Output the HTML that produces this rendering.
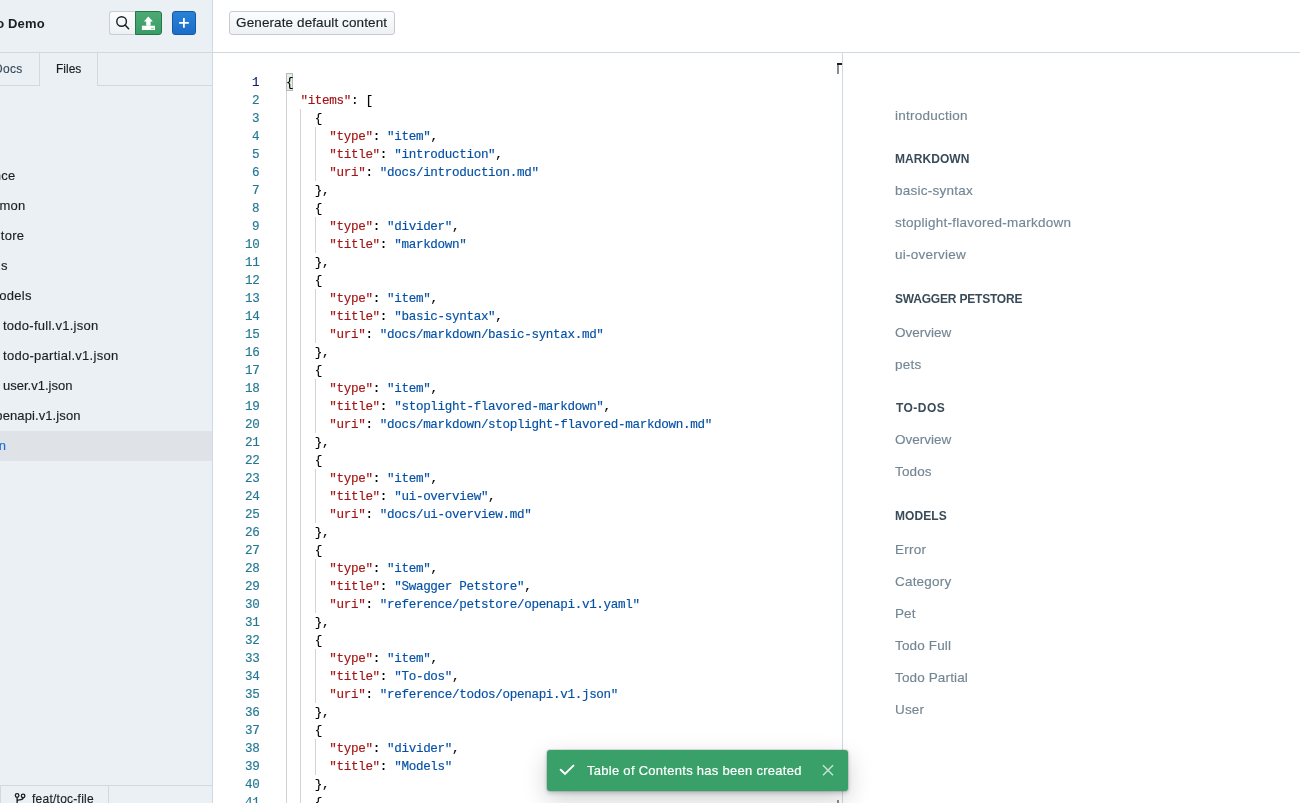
<!DOCTYPE html>
<html><head><meta charset="utf-8">
<style>
*{box-sizing:border-box;margin:0;padding:0}
html,body{width:1300px;height:803px;overflow:hidden;background:#fff;font-family:"Liberation Sans",sans-serif;position:relative}
.abs{position:absolute}
.title,.tab,.fi,#gen,.nums div,.code div,.toc,.toch,.tt{will-change:transform}
.code div,.nums div{-webkit-text-stroke:0.15px currentColor}
.toc,.fi,.tab,#gen{-webkit-text-stroke:0.15px currentColor}
.code i.k{-webkit-text-stroke:0.15px #a31515}.code i.v{-webkit-text-stroke:0.15px #0451a5}
#side{position:absolute;left:0;top:0;width:212px;height:803px;background:#ebf0f4;overflow:hidden}
.bl{position:absolute;background:#cfd9e1}
.title{position:absolute;right:167.6px;top:16px;font-weight:bold;font-size:13px;color:#182026;white-space:nowrap;line-height:16px;letter-spacing:0.15px}
.btn{position:absolute;top:11px;height:24px}
#bsearch{left:109px;width:27px;background:linear-gradient(#fdfdfe,#eef1f3);border:1px solid #c9ced2;border-right:none;border-radius:3px 0 0 3px}
#bup{left:135px;width:27px;background:linear-gradient(#4caa74,#3a9d66);border:1px solid #23764a;border-radius:0 3px 3px 0}
#bplus{left:172px;width:24px;background:linear-gradient(#2a82d8,#1a6dc8);border:1px solid #1558a3;border-radius:3px}
.tab{position:absolute;top:52px;height:34px;font-size:13px;color:#182026;line-height:34px;white-space:nowrap}
.fi{position:absolute;font-size:13px;color:#182026;white-space:nowrap;line-height:16px;letter-spacing:0.3px}
#sel{position:absolute;left:0;top:431px;width:212px;height:30px;background:#dfe3e7}
#main{position:absolute;left:213px;top:0;width:1087px;height:803px}
#gen{position:absolute;left:229px;top:11px;width:166px;height:24px;border-radius:3px;background:linear-gradient(#fbfcfd,#eef1f4);border:1px solid #c5cbd0;font-size:13.5px;color:#182026;line-height:21px;padding-left:6.1px;white-space:nowrap;letter-spacing:0.1px}
.nums div{position:absolute;right:1040.6px;height:18px;font:12.6px/18px "Liberation Mono",monospace;letter-spacing:-0.34px;margin-top:1px;color:#237893;white-space:pre}
.nums div.act{color:#0b216f}
.code div{position:absolute;left:286px;height:18px;font:12.6px/18px "Liberation Mono",monospace;letter-spacing:-0.34px;color:#000;white-space:pre}
.code i{font-style:normal}
.code i.k{color:#a31515}
.code i.v{color:#0451a5}
.bm{font-weight:normal;display:inline-block;height:18px;background:#e5f0e5;outline:1px solid #b9b9b9;outline-offset:-1px}
.g{position:absolute;width:1px;background:#d3d3d3}
.toc{position:absolute;left:895px;font-size:13.5px;color:#738694;white-space:nowrap;line-height:16px;letter-spacing:0.25px}
.toch{position:absolute;left:895px;font-size:12px;font-weight:bold;color:#394b59;white-space:nowrap;line-height:16px;letter-spacing:-0.2px}
#toast{position:absolute;left:547px;top:750px;width:301px;height:41px;background:#3aa06a;border-radius:3px;box-shadow:0 0 0 1px rgba(16,22,26,.1),0 2px 4px rgba(16,22,26,.2),0 8px 24px rgba(16,22,26,.2)}
</style></head><body>
<div id="side">
  <div class="title">Stoplight To-do Demo</div>
  <div class="btn" id="bsearch"><svg width="26" height="22" style="position:absolute;left:0;top:0"><circle cx="11.6" cy="9.5" r="4.8" fill="none" stroke="#182026" stroke-width="1.4"/><line x1="15.1" y1="13.1" x2="18.6" y2="16.8" stroke="#182026" stroke-width="1.5" stroke-linecap="round"/></svg></div>
  <div class="btn" id="bup"><svg width="25" height="22" style="position:absolute;left:0;top:0"><path d="M12.3 4.6 L7.9 9.4 L10.2 9.4 L10.2 13.8 L14.6 13.8 L14.6 9.4 L16.9 9.4 Z" fill="#fff"/><path d="M5.9 13.7 H19 V18 H5.9 Z" fill="#fff"/><rect x="15" y="15.9" width="3" height="1.2" fill="#9fd0b3"/></svg></div>
  <div class="btn" id="bplus"><svg width="22" height="22" style="position:absolute;left:0;top:0"><path d="M10.9 6.1 V15.8 M6.1 10.95 H15.8" stroke="#fff" stroke-width="1.8"/></svg></div>
  <div class="bl" style="left:0;top:52px;width:212px;height:1px"></div>
  <div class="tab" style="right:189.2px;color:#394b59;text-align:right;font-size:12px;letter-spacing:0.3px">Docs</div>
  <div class="bl" style="left:39px;top:53px;width:1px;height:33px"></div>
  <div class="tab" style="left:56px;font-size:12px;letter-spacing:0px">Files</div>
  <div class="bl" style="left:97px;top:53px;width:1px;height:33px"></div>
  <div class="bl" style="left:0;top:85px;width:39px;height:1px"></div>
  <div class="bl" style="left:97px;top:85px;width:115px;height:1px"></div>
  <div id="sel"></div>
  <div class="fi" style="right:196px;top:168px">reference</div>
  <div class="fi" style="right:186px;top:198px">common</div>
  <div class="fi" style="right:188px;top:228px">petstore</div>
  <div class="fi" style="right:204.4px;top:258px">s</div>
  <div class="fi" style="right:180px;top:288px">models</div>
  <div class="fi" style="left:3px;top:318px;letter-spacing:0.26px">todo-full.v1.json</div>
  <div class="fi" style="left:3px;top:348px;letter-spacing:0.28px">todo-partial.v1.json</div>
  <div class="fi" style="left:3px;top:378px;letter-spacing:0px">user.v1.json</div>
  <div class="fi" style="right:131px;top:408px;letter-spacing:0.1px">openapi.v1.json</div>
  <div class="fi" style="right:206px;top:438px;color:#1772d8">toc.json</div>
  <div class="bl" style="left:0;top:785px;width:212px;height:1px"></div>
  <div class="bl" style="left:0;top:786px;width:1px;height:17px"></div>
  <div class="bl" style="left:108px;top:786px;width:1px;height:17px"></div>
  <svg class="abs" style="left:0;top:786px" width="40" height="17"><circle cx="17.1" cy="9.5" r="1.8" fill="none" stroke="#182026" stroke-width="1.3"/><circle cx="23.1" cy="9.9" r="1.8" fill="none" stroke="#182026" stroke-width="1.3"/><path d="M17.1 11.3 V17 M23.1 11.7 C23.1 13.5 21.5 13.8 19.5 13.8 C18 13.8 17.1 14.5 17.1 15.5" fill="none" stroke="#182026" stroke-width="1.3"/></svg>
  <div class="fi" style="left:32.4px;top:791.4px;font-size:12px;letter-spacing:0.25px">feat/toc-file</div>
</div>
<div class="bl" style="left:212px;top:0;width:1px;height:803px"></div>
<div class="bl" style="left:213px;top:52px;width:1087px;height:1px"></div>
<div id="gen">Generate default content</div>
<div class="nums">
<div class="act" style="top:73px">1</div>
<div style="top:91px">2</div>
<div style="top:109px">3</div>
<div style="top:127px">4</div>
<div style="top:145px">5</div>
<div style="top:163px">6</div>
<div style="top:181px">7</div>
<div style="top:199px">8</div>
<div style="top:217px">9</div>
<div style="top:235px">10</div>
<div style="top:253px">11</div>
<div style="top:271px">12</div>
<div style="top:289px">13</div>
<div style="top:307px">14</div>
<div style="top:325px">15</div>
<div style="top:343px">16</div>
<div style="top:361px">17</div>
<div style="top:379px">18</div>
<div style="top:397px">19</div>
<div style="top:415px">20</div>
<div style="top:433px">21</div>
<div style="top:451px">22</div>
<div style="top:469px">23</div>
<div style="top:487px">24</div>
<div style="top:505px">25</div>
<div style="top:523px">26</div>
<div style="top:541px">27</div>
<div style="top:559px">28</div>
<div style="top:577px">29</div>
<div style="top:595px">30</div>
<div style="top:613px">31</div>
<div style="top:631px">32</div>
<div style="top:649px">33</div>
<div style="top:667px">34</div>
<div style="top:685px">35</div>
<div style="top:703px">36</div>
<div style="top:721px">37</div>
<div style="top:739px">38</div>
<div style="top:757px">39</div>
<div style="top:775px">40</div>
<div style="top:793px">41</div>
</div>
<div class="abs" style="left:286px;top:73px;width:7px;height:18px;background:#e5f0e5;border:1px solid #b9b9b9"></div>
<span class="g" style="left:286px;top:91px;height:720px"></span>
<span class="g" style="left:300px;top:109px;height:702px"></span>
<span class="g" style="left:315px;top:127px;height:54px"></span>
<span class="g" style="left:315px;top:217px;height:36px"></span>
<span class="g" style="left:315px;top:289px;height:54px"></span>
<span class="g" style="left:315px;top:379px;height:54px"></span>
<span class="g" style="left:315px;top:469px;height:54px"></span>
<span class="g" style="left:315px;top:559px;height:54px"></span>
<span class="g" style="left:315px;top:649px;height:54px"></span>
<span class="g" style="left:315px;top:739px;height:36px"></span>
<div class="code">
<div style="top:74px">{</div>
<div style="top:92px">  <i class="k">&quot;items&quot;</i>: [</div>
<div style="top:110px">    {</div>
<div style="top:128px">      <i class="k">&quot;type&quot;</i>: <i class="v">&quot;item&quot;</i>,</div>
<div style="top:146px">      <i class="k">&quot;title&quot;</i>: <i class="v">&quot;introduction&quot;</i>,</div>
<div style="top:164px">      <i class="k">&quot;uri&quot;</i>: <i class="v">&quot;docs/introduction.md&quot;</i></div>
<div style="top:182px">    },</div>
<div style="top:200px">    {</div>
<div style="top:218px">      <i class="k">&quot;type&quot;</i>: <i class="v">&quot;divider&quot;</i>,</div>
<div style="top:236px">      <i class="k">&quot;title&quot;</i>: <i class="v">&quot;markdown&quot;</i></div>
<div style="top:254px">    },</div>
<div style="top:272px">    {</div>
<div style="top:290px">      <i class="k">&quot;type&quot;</i>: <i class="v">&quot;item&quot;</i>,</div>
<div style="top:308px">      <i class="k">&quot;title&quot;</i>: <i class="v">&quot;basic-syntax&quot;</i>,</div>
<div style="top:326px">      <i class="k">&quot;uri&quot;</i>: <i class="v">&quot;docs/markdown/basic-syntax.md&quot;</i></div>
<div style="top:344px">    },</div>
<div style="top:362px">    {</div>
<div style="top:380px">      <i class="k">&quot;type&quot;</i>: <i class="v">&quot;item&quot;</i>,</div>
<div style="top:398px">      <i class="k">&quot;title&quot;</i>: <i class="v">&quot;stoplight-flavored-markdown&quot;</i>,</div>
<div style="top:416px">      <i class="k">&quot;uri&quot;</i>: <i class="v">&quot;docs/markdown/stoplight-flavored-markdown.md&quot;</i></div>
<div style="top:434px">    },</div>
<div style="top:452px">    {</div>
<div style="top:470px">      <i class="k">&quot;type&quot;</i>: <i class="v">&quot;item&quot;</i>,</div>
<div style="top:488px">      <i class="k">&quot;title&quot;</i>: <i class="v">&quot;ui-overview&quot;</i>,</div>
<div style="top:506px">      <i class="k">&quot;uri&quot;</i>: <i class="v">&quot;docs/ui-overview.md&quot;</i></div>
<div style="top:524px">    },</div>
<div style="top:542px">    {</div>
<div style="top:560px">      <i class="k">&quot;type&quot;</i>: <i class="v">&quot;item&quot;</i>,</div>
<div style="top:578px">      <i class="k">&quot;title&quot;</i>: <i class="v">&quot;Swagger Petstore&quot;</i>,</div>
<div style="top:596px">      <i class="k">&quot;uri&quot;</i>: <i class="v">&quot;reference/petstore/openapi.v1.yaml&quot;</i></div>
<div style="top:614px">    },</div>
<div style="top:632px">    {</div>
<div style="top:650px">      <i class="k">&quot;type&quot;</i>: <i class="v">&quot;item&quot;</i>,</div>
<div style="top:668px">      <i class="k">&quot;title&quot;</i>: <i class="v">&quot;To-dos&quot;</i>,</div>
<div style="top:686px">      <i class="k">&quot;uri&quot;</i>: <i class="v">&quot;reference/todos/openapi.v1.json&quot;</i></div>
<div style="top:704px">    },</div>
<div style="top:722px">    {</div>
<div style="top:740px">      <i class="k">&quot;type&quot;</i>: <i class="v">&quot;divider&quot;</i>,</div>
<div style="top:758px">      <i class="k">&quot;title&quot;</i>: <i class="v">&quot;Models&quot;</i></div>
<div style="top:776px">    },</div>
<div style="top:794px">    {</div>
</div>
<div class="abs" style="left:837px;top:63px;width:5px;height:2px;background:#1e1e1e"></div>
<div class="abs" style="left:837px;top:65px;width:2px;height:9px;background:#8c8c8c"></div>
<div class="bl" style="left:842px;top:53px;width:1px;height:750px"></div>
<div class="abs" style="left:837px;top:800px;width:2px;height:3px;background:#8c8c8c"></div>

<div class="toc" style="top:107.6px">introduction</div>
<div class="toch" style="top:151px;letter-spacing:0.05px">MARKDOWN</div>
<div class="toc" style="top:183.2px">basic-syntax</div>
<div class="toc" style="top:215.3px">stoplight-flavored-markdown</div>
<div class="toc" style="top:247.3px">ui-overview</div>
<div class="toch" style="top:291px;letter-spacing:-0.2px">SWAGGER PETSTORE</div>
<div class="toc" style="top:324.6px;letter-spacing:0">Overview</div>
<div class="abs" style="left:890px;top:350px;width:60px;height:21px;overflow:hidden"><div class="toc" style="top:6.5px;left:4.85px">pets</div></div>
<div class="toch" style="top:400px;left:896px;letter-spacing:0.45px">TO-DOS</div>
<div class="toc" style="top:432.2px;letter-spacing:0">Overview</div>
<div class="toc" style="top:463.8px;letter-spacing:0.13px">Todos</div>
<div class="toch" style="top:508px;letter-spacing:0.08px">MODELS</div>
<div class="toc" style="top:542px">Error</div>
<div class="toc" style="top:574px;letter-spacing:0.2px">Category</div>
<div class="toc" style="top:606px;letter-spacing:0.1px">Pet</div>
<div class="toc" style="top:638px;letter-spacing:0.15px">Todo Full</div>
<div class="toc" style="top:670px;letter-spacing:0.14px">Todo Partial</div>
<div class="toc" style="top:702px;letter-spacing:0.17px">User</div>

<div id="toast">
  <svg class="abs" style="left:12px;top:14px" width="16" height="13"><path d="M1.7 5.7 L6 9.9 L14.4 1.6" fill="none" stroke="#fff" stroke-width="2" stroke-linecap="round"/></svg>
  <div class="abs tt" style="left:40px;top:13px;font-size:13px;color:#fff;white-space:nowrap;line-height:16px;letter-spacing:0.28px;-webkit-text-stroke:0.2px #fff">Table of Contents has been created</div>
  <svg class="abs" style="left:275px;top:14px" width="12" height="12"><path d="M1 1.2 L11 11.2 M11 1.2 L1 11.2" stroke="#c4e3d0" stroke-width="1.5"/></svg>
</div>
</body></html>
